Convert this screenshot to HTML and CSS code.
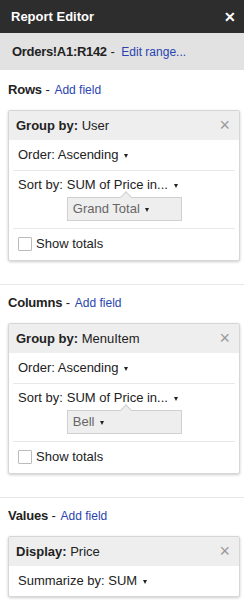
FILE: index.html
```html
<!DOCTYPE html>
<html lang="en">
<head>
  <meta charset="UTF-8">
  <title>Report Editor</title>
  <link rel="stylesheet" href="styles.css">
</head>
<body>
  <div class="titlebar">
    <span>Report Editor</span>
    <span class="close">&#10005;</span>
  </div>
  <div class="rangebar">
    <b>Orders!A1:R142</b> - <a href="#">Edit range...</a>
  </div>

  <div class="section first">
    <div class="label"><b>Rows</b> - <a href="#">Add field</a></div>
    <div class="card">
      <div class="card-head"><span><b>Group by:</b> User</span><span class="remove">&#215;</span></div>
      <div class="row">Order: Ascending <span class="arrow"></span></div>
      <div class="row sort">
        <span class="key">Sort by:</span>
        <div class="value">
          <div>SUM of Price in... <span class="arrow"></span></div>
          <div class="bubble">Grand Total <span class="arrow"></span></div>
        </div>
      </div>
      <div class="row check"><span class="box"></span>Show totals</div>
    </div>
  </div>

  <div class="section">
    <div class="label"><b>Columns</b> - <a href="#">Add field</a></div>
    <div class="card">
      <div class="card-head"><span><b>Group by:</b> MenuItem</span><span class="remove">&#215;</span></div>
      <div class="row">Order: Ascending <span class="arrow"></span></div>
      <div class="row sort">
        <span class="key">Sort by:</span>
        <div class="value">
          <div>SUM of Price in... <span class="arrow"></span></div>
          <div class="bubble">Bell <span class="arrow"></span></div>
        </div>
      </div>
      <div class="row check"><span class="box"></span>Show totals</div>
    </div>
  </div>

  <div class="section last">
    <div class="label"><b>Values</b> - <a href="#">Add field</a></div>
    <div class="card">
      <div class="card-head"><span><b>Display:</b> Price</span><span class="remove">&#215;</span></div>
      <div class="row">Summarize by: SUM <span class="arrow"></span></div>
    </div>
  </div>
</body>
</html>
```

FILE: styles.css
```css
body {
  margin: 0;
  font-family: "Liberation Sans", Arial, sans-serif;
  font-size: 13px;
  color: #222;
  background: white;
}
a {
  color: #2a44b0;
  text-decoration: none;
  font-size: 12px;
  margin-left: 1px;
}
.titlebar {
  height: 33px;
  background: #2d2d2d;
  color: white;
  font-weight: bold;
  display: flex;
  align-items: center;
  justify-content: space-between;
  padding: 0 8px 0 11px;
}
.close {
  font-size: 14px;
}
.rangebar {
  height: 37px;
  background: #e2e2e2;
  display: flex;
  align-items: center;
  padding-left: 12px;
  white-space: pre;
}
.rangebar b {
  letter-spacing: -0.3px;
}
.rangebar a {
  margin-left: 3px;
}
.section {
  padding: 11px 4px 23px 8px;
  border-bottom: 1px solid #e8e8e8;
}
.section.first {
  padding-top: 13px;
}
.section.last {
  border-bottom: none;
}
.label {
  line-height: 14px;
  margin-bottom: 13px;
}
.label b {
  letter-spacing: -0.2px;
}
.card {
  border: 1px solid #d6d6d6;
  border-radius: 2px;
  box-shadow: 0 1px 3px rgba(0, 0, 0, 0.2);
  background: white;
}
.card-head {
  height: 29px;
  background: #eeeeee;
  display: flex;
  align-items: center;
  justify-content: space-between;
  padding: 0 9px 0 7px;
}
.remove {
  color: #999;
  font-size: 18px;
  font-weight: normal;
}
.row {
  margin: 0 4px;
  padding: 8px 5px;
  line-height: 14px;
  border-bottom: 1px solid #e8e8e8;
}
.row:last-child {
  border-bottom: none;
}
.sort {
  display: flex;
  padding-top: 7px;
  padding-bottom: 7px;
}
.key {
  margin-right: 4px;
}
.bubble {
  position: relative;
  margin-top: 5px;
  width: 108px;
  height: 22px;
  line-height: 22px;
  padding-left: 5px;
  background: #eeeeee;
  border: 1px solid #d0d0d0;
  color: #666;
}
.bubble::before {
  content: "";
  position: absolute;
  top: -5px;
  left: 54px;
  width: 7px;
  height: 7px;
  background: #eeeeee;
  border-top: 1px solid #d0d0d0;
  border-left: 1px solid #d0d0d0;
  transform: rotate(45deg);
}
.arrow {
  display: inline-block;
  width: 0;
  height: 0;
  margin-left: 2px;
  vertical-align: middle;
  border-left: 2.5px solid transparent;
  border-right: 2.5px solid transparent;
  border-top: 4px solid #222;
}
.check {
  display: flex;
  align-items: center;
  padding-top: 8px;
  padding-bottom: 9px;
}
.box {
  width: 12px;
  height: 12px;
  border: 1px solid #bbb;
  border-radius: 1px;
  margin-right: 4px;
  background: white;
}
```
